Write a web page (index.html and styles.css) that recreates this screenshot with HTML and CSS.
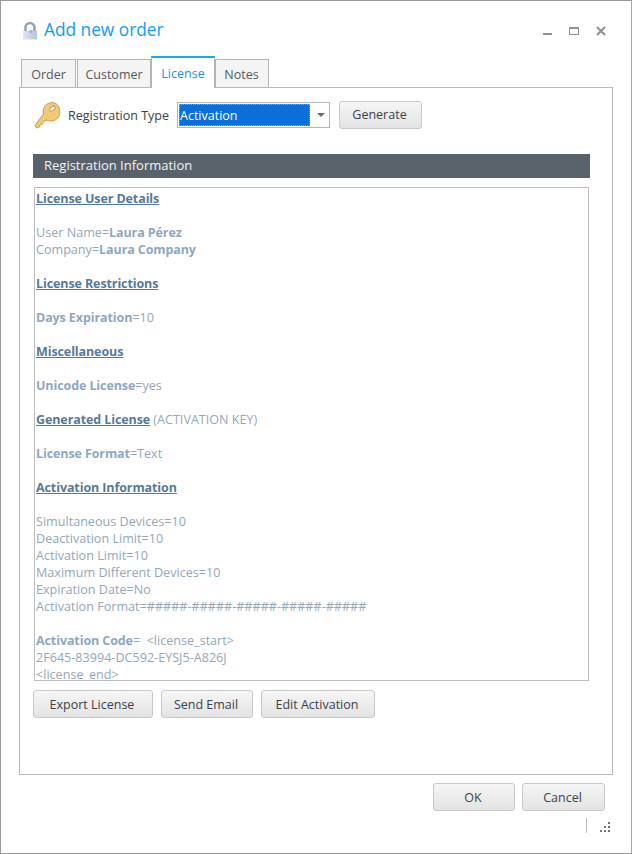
FILE: index.html
```html
<!DOCTYPE html>
<html lang="en">
<head>
<meta charset="utf-8">
<title>Add new order</title>
<link rel="stylesheet" href="styles.css">
</head>
<body>
<div class="window">
  <header class="titlebar">
    <svg class="lock" width="16" height="20" viewBox="0 0 16 20">
      <defs>
        <linearGradient id="lockBody" x1="0" y1="0" x2="1" y2="0"><stop offset="0" stop-color="#dfe7f0"/><stop offset="1" stop-color="#b4c6da"/></linearGradient>
      </defs>
      <path d="M3.500 11V6.500a4.500 4.500 0 0 1 9 0V11" fill="none" stroke="#93a5b6" stroke-width="2.600"/>
      <path d="M1 10h14v8.500H1z" fill="url(#lockBody)"/>
      <circle cx="9" cy="10.500" r="1.800" fill="#a5b8cb"/>
    </svg>
    <h1 class="title">Add new order</h1>
    <div class="controls">
      <svg width="10" height="10" viewBox="0 0 10 10"><rect x="0" y="7" width="9" height="2" fill="#8c9296"/></svg>
      <svg width="11" height="10" viewBox="0 0 11 10"><rect x="0.500" y="1.500" width="9" height="7" fill="none" stroke="#8c9296"/><rect x="0" y="1" width="10" height="2" fill="#8c9296"/></svg>
      <svg width="10" height="10" viewBox="0 0 10 10"><path d="M1 1l8 8M9 1l-8 8" stroke="#8c9296" stroke-width="2"/></svg>
    </div>
  </header>
  <nav class="tabs">
    <span class="tab tab-order">Order</span>
    <span class="tab tab-customer">Customer</span>
    <span class="tab tab-active">License</span>
    <span class="tab tab-notes">Notes</span>
  </nav>
  <main class="panel">
    <div class="regrow">
      <svg class="key" width="28" height="28" viewBox="0 0 28 28">
        <path d="M2 24.500l1.500 2.500 3-1 .5-2.500 2.500-.5 1-2.500 3-1.500c5 2 10 1 12.500-4 1.500-4 .5-9-2-11.500S17 1 13.500 3.500c-3 2.500-4 6-3 9.500z" fill="#f3c877" stroke="#c99a4d"/>
        <ellipse cx="19.500" cy="7.500" rx="3.200" ry="2" transform="rotate(-35 19.500 7.500)" fill="#fff" stroke="#c99a4d"/>
      </svg>
      <span class="reglabel">Registration Type</span>
      <div class="select">
        <span class="select-value">Activation</span>
        <span class="select-arrow"></span>
      </div>
      <button class="btn btn-generate">Generate</button>
    </div>
    <div class="sectionbar">Registration Information</div>
    <div class="textbox">
      <div class="line"><b class="head">License User Details</b></div>
      <div class="line"></div>
      <div class="line">User Name=<b>Laura Pérez</b></div>
      <div class="line">Company=<b>Laura Company</b></div>
      <div class="line"></div>
      <div class="line"><b class="head">License Restrictions</b></div>
      <div class="line"></div>
      <div class="line"><b>Days Expiration</b>=10</div>
      <div class="line"></div>
      <div class="line"><b class="head">Miscellaneous</b></div>
      <div class="line"></div>
      <div class="line"><b>Unicode License</b>=yes</div>
      <div class="line"></div>
      <div class="line"><b class="head">Generated License</b> (ACTIVATION KEY)</div>
      <div class="line"></div>
      <div class="line"><b>License Format</b>=Text</div>
      <div class="line"></div>
      <div class="line"><b class="head">Activation Information</b></div>
      <div class="line"></div>
      <div class="line">Simultaneous Devices=10</div>
      <div class="line">Deactivation Limit=10</div>
      <div class="line">Activation Limit=10</div>
      <div class="line">Maximum Different Devices=10</div>
      <div class="line">Expiration Date=No</div>
      <div class="line">Activation Format=#####-#####-#####-#####-#####</div>
      <div class="line"></div>
      <div class="line"><b>Activation Code</b>= &nbsp;&lt;license_start&gt;</div>
      <div class="line">2F645-83994-DC592-EYSJ5-A826J</div>
      <div class="line">&lt;license_end&gt;</div>
    </div>
    <div class="actions">
      <button class="btn btn-export">Export License</button>
      <button class="btn btn-send">Send Email</button>
      <button class="btn btn-edit">Edit Activation</button>
    </div>
  </main>
  <footer class="footer">
    <button class="btn btn-ok">OK</button>
    <button class="btn btn-cancel">Cancel</button>
  </footer>
  <div class="statusrow">
    <span class="statussep"></span>
    <svg class="grip" width="13" height="12" viewBox="0 0 13 12" fill="#6f7478">
      <rect x="10" y="1" width="2" height="2"/>
      <rect x="6" y="5" width="2" height="2"/><rect x="10" y="5" width="2" height="2"/>
      <rect x="2" y="9" width="2" height="2"/><rect x="6" y="9" width="2" height="2"/><rect x="10" y="9" width="2" height="2"/>
    </svg>
  </div>
</div>
</body>
</html>
```
FILE: styles.css
```css
* { box-sizing: border-box; }
html, body { margin: 0; padding: 0; background: #fff; }
body { width: 632px; height: 854px; overflow: hidden; font-family: "Open Sans", "Noto Sans", sans-serif; font-size: 12px; }
.window { width: 632px; height: 854px; border: 1px solid #999; border-right-color: #a8a8a8; background: #fff; display: flex; flex-direction: column; }

.titlebar { height: 55px; padding: 19px 25px 0 21px; display: flex; align-items: flex-start; flex: none; }
.lock { flex: none; margin-top: 1px; }
.title { margin: -3px 0 0 6px; font-size: 17.300px; line-height: 26px; font-weight: 400; color: #109df0; flex: 1; }
.controls { display: flex; gap: 16px; margin-top: 6px; }

.tabs { display: flex; height: 31px; padding-left: 20px; flex: none; position: relative; z-index: 1; align-items: flex-end; }
.tab { height: 28px; padding-top: 2px; border: 1px solid #b4b4b4; border-bottom: 0; background: #f4f4f4; color: #55595e; display: flex; align-items: center; justify-content: center; font-size: 12.500px; }
.tab-order { width: 55px; }
.tab-customer { width: 74px; margin-left: 1px; }
.tab-active { width: 64px; height: 32px; margin-bottom: -1px; padding-top: 0; background: #fff; color: #1e8fdc; border-top: 2px solid #1aa5ef; }
.tab-notes { width: 54px; padding-right: 1px; }

.panel { width: 594px; height: 688px; margin-left: 18px; border: 1px solid #b9b9b9; padding: 13px 0 0 13px; flex: none; }
.regrow { display: flex; align-items: center; height: 27px; }
.key { flex: none; margin-right: 7px; }
.reglabel { width: 109px; padding-top: 2px; color: #3c4044; font-size: 12.500px; white-space: nowrap; flex: none; }
.select { width: 153px; height: 26px; border: 1px solid #b5b5b5; padding: 1px; display: flex; flex: none; background: #fff; }
.select-value { width: 131px; background: #0a6fd8; outline: 1px dotted #d99a3a; outline-offset: -1px; color: #fff; line-height: 24px; height: 22px; padding-left: 1px; font-size: 12.500px; }
.select-arrow { width: 0; height: 0; margin: 9px 0 0 7px; border-left: 4px solid transparent; border-right: 4px solid transparent; border-top: 4px solid #6a6a6a; }
.btn { font-family: inherit; font-size: 12.500px; color: #3c4248; height: 28px; padding: 0 2px 0 0; border: 1px solid #c9c9c9; border-radius: 3px; background: linear-gradient(#f6f6f6, #e3e3e3); flex: none; }
.btn-generate { width: 83px; margin-left: 9px; }

.sectionbar { width: 557px; height: 24px; margin-top: 26px; background: #59626b; color: #f2f4f5; padding-left: 11px; line-height: 23px; font-size: 13px; }
.textbox { width: 555px; height: 494px; margin: 9px 0 0 1px; border: 1px solid #bdbdbd; padding: 2px 0 0 1px; overflow: hidden; color: #94a7b9; font-size: 12.600px; }
.line { height: 17px; line-height: 17px; white-space: nowrap; }
.line b { font-weight: 700; font-size: 12.500px; letter-spacing: -0.1px; color: #8fa7bf; }
.line b.head { color: #557a9c; text-decoration: underline; }

.actions { display: flex; gap: 8px; margin-top: 9px; }
.btn-export { width: 120px; }
.btn-send { width: 92px; }
.btn-edit { width: 114px; }

.footer { display: flex; gap: 7px; padding: 8px 0 0 432px; flex: none; }
.btn-ok { width: 82px; }
.btn-cancel { width: 83px; }

.statusrow { display: flex; align-items: flex-start; padding: 7px 0 0 585px; flex: none; }
.statussep { width: 1px; height: 15px; background: #b9b9b9; }
.grip { margin: 3px 0 0 11px; }
```
